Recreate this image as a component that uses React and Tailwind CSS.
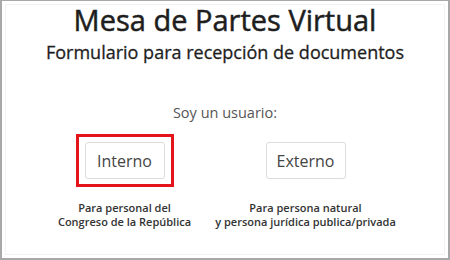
import React from 'react';

const font = { fontFamily: '"Open Sans", "Noto Sans", sans-serif' };

const Option = ({ label, lines, selected }) => (
  <div className="flex w-[181px] flex-col items-center">
    <div
      className={`flex h-[53px] w-[98px] items-center justify-center border-[3px] ${
        selected ? 'border-[#e4141b]' : 'border-transparent'
      }`}
    >
      <button className="h-[37px] w-[80px] rounded-[3px] border border-[#dcdcdc] bg-white text-[16px] text-[#444]">
        {label}
      </button>
    </div>
    <div className="mt-[14px] whitespace-nowrap text-center text-[11px] font-semibold leading-[14px] text-[#333]">
      {lines.map((l) => (
        <div key={l}>{l}</div>
      ))}
    </div>
  </div>
);

export default function App() {
  return (
    <div className="h-[260px] w-[450px] bg-white" style={font}>
      <div className="h-full w-full border-2 border-t border-[#a8a8a8] p-[3px]">
        <div className="flex h-full w-full flex-col items-center border border-[#f2f2f2]">
          <h1 className="mt-[-5px] text-[29px] leading-[40px] text-[#1e1e1e] [-webkit-text-stroke:0.5px_#1e1e1e]">
            Mesa de Partes Virtual
          </h1>
          <h2 className="text-[18px] leading-[24px] text-[#1e1e1e] [-webkit-text-stroke:0.3px_#1e1e1e]">
            Formulario para recepción de documentos
          </h2>
          <p className="mt-[39px] text-[14.5px] leading-[20px] text-[#555]">Soy un usuario:</p>
          <div className="mt-[11px] flex w-[362px] -translate-x-[10px]">
            <Option label="Interno" lines={['Para personal del', 'Congreso de la República']} selected />
            <Option label="Externo" lines={['Para persona natural', 'y persona jurídica publica/privada']} />
          </div>
        </div>
      </div>
    </div>
  );
}
